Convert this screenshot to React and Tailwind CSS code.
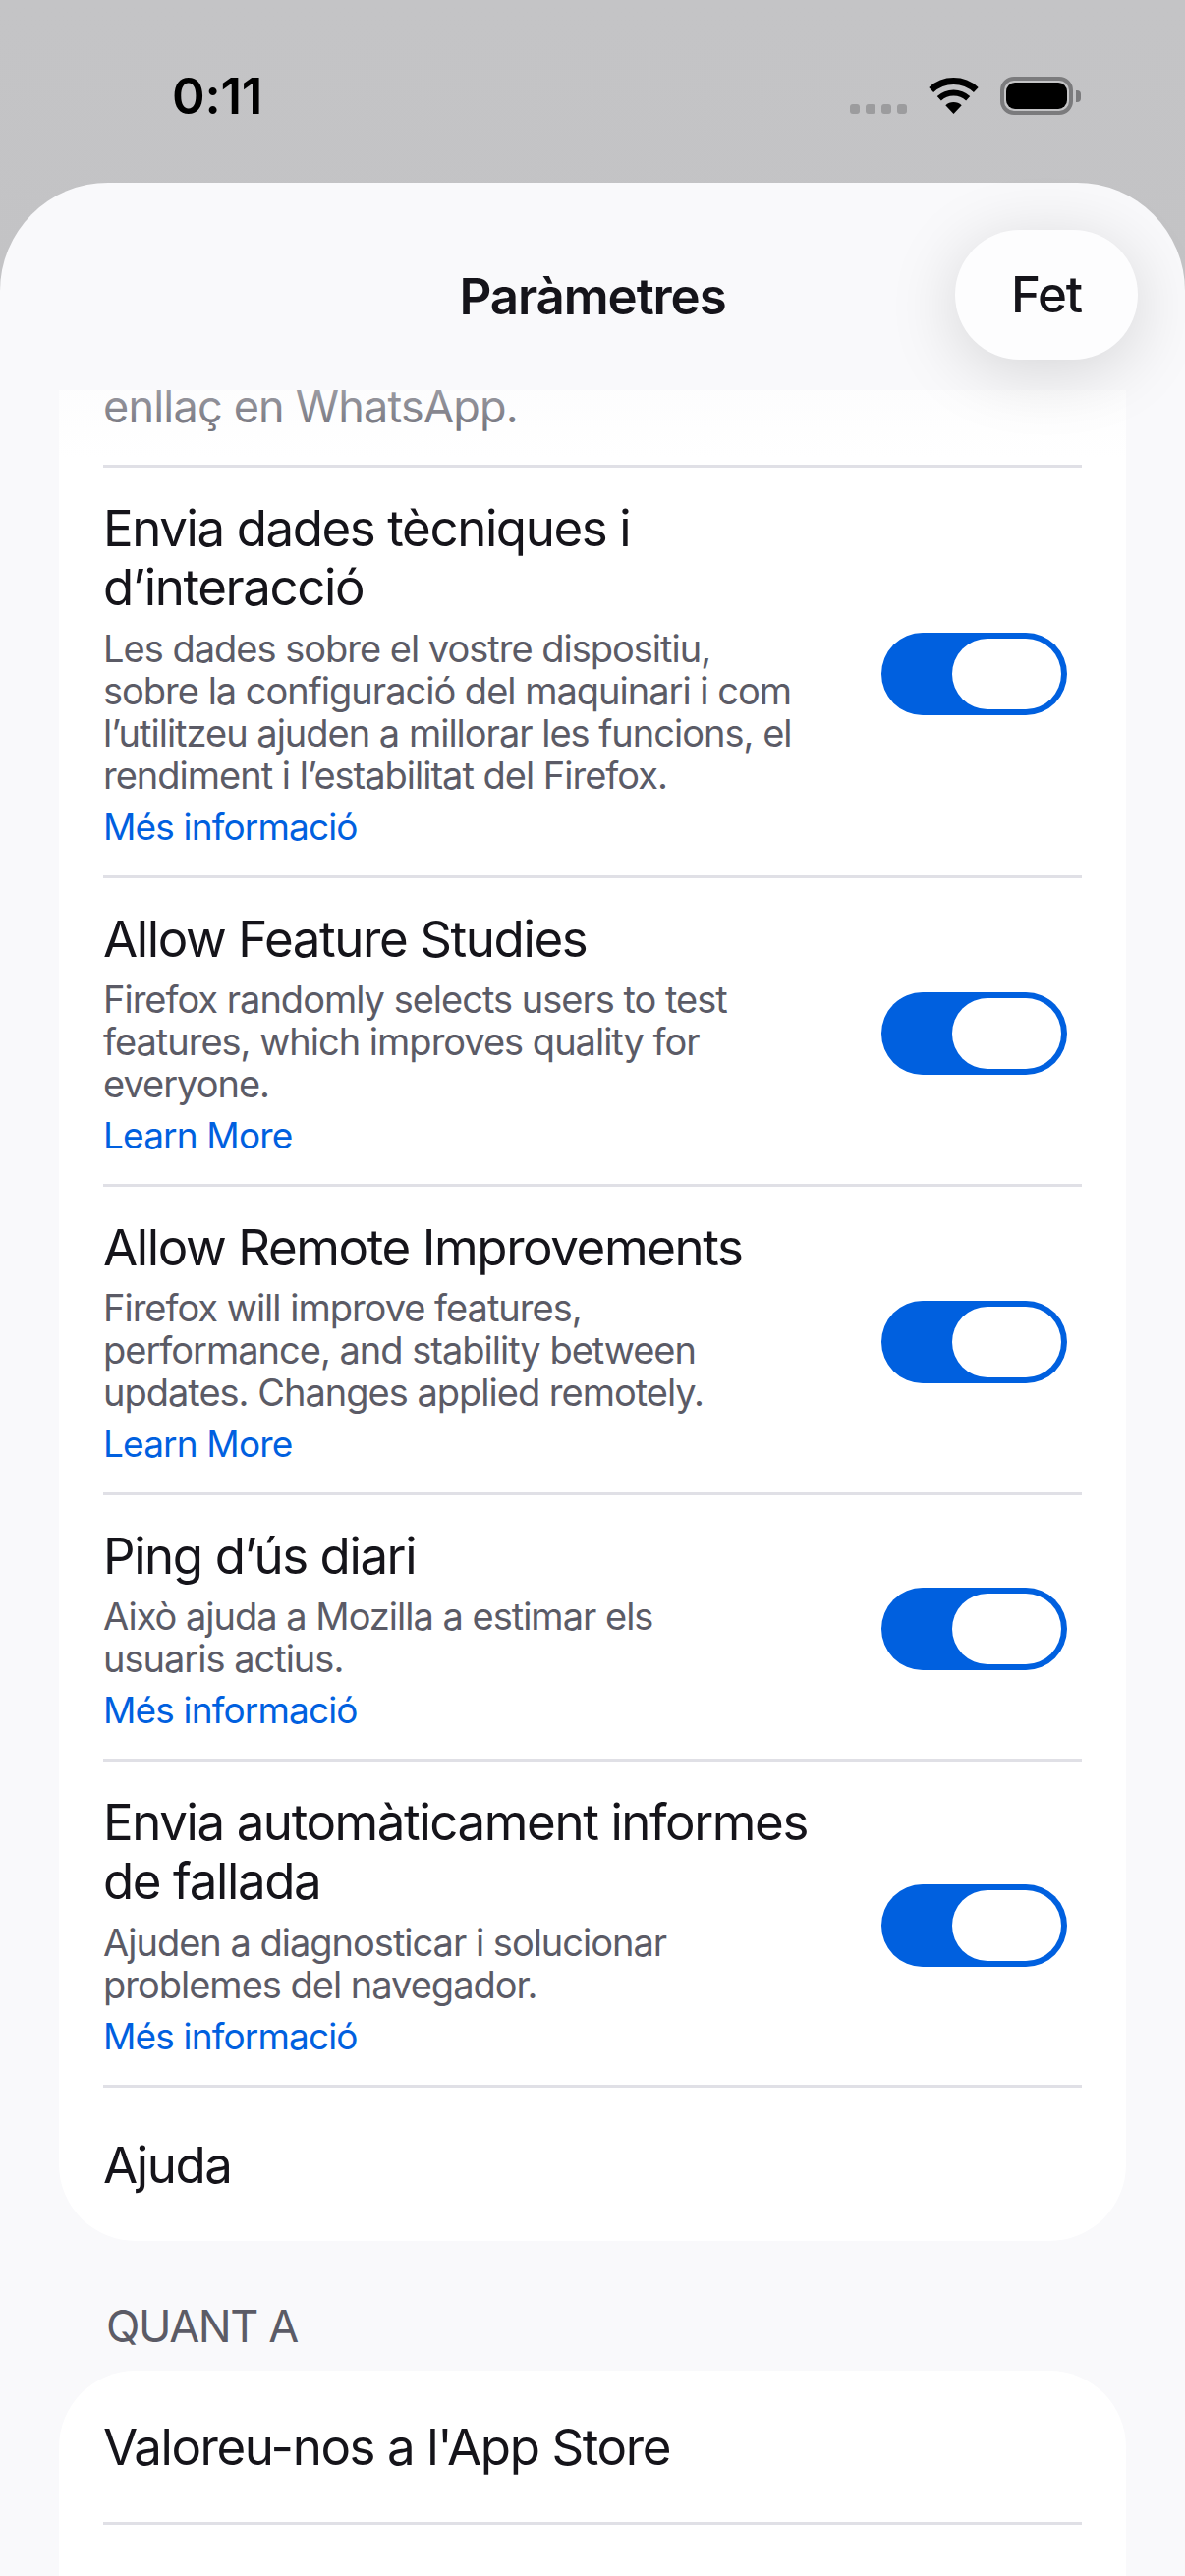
import React from "react";

const rows = [
  {
    title: ["Envia dades tècniques i", "d’interacció"],
    sub: [
      "Les dades sobre el vostre dispositiu,",
      "sobre la configuració del maquinari i com",
      "l’utilitzeu ajuden a millorar les funcions, el",
      "rendiment i l’estabilitat del Firefox.",
    ],
    link: "Més informació",
  },
  {
    title: ["Allow Feature Studies"],
    sub: [
      "Firefox randomly selects users to test",
      "features, which improves quality for",
      "everyone.",
    ],
    link: "Learn More",
  },
  {
    title: ["Allow Remote Improvements"],
    sub: [
      "Firefox will improve features,",
      "performance, and stability between",
      "updates. Changes applied remotely.",
    ],
    link: "Learn More",
  },
  {
    title: ["Ping d’ús diari"],
    sub: ["Això ajuda a Mozilla a estimar els", "usuaris actius."],
    link: "Més informació",
  },
  {
    title: ["Envia automàticament informes", "de fallada"],
    sub: ["Ajuden a diagnosticar i solucionar", "problemes del navegador."],
    link: "Més informació",
  },
];

function Divider() {
  return <div className="mx-[45px] h-[3px] bg-[#e0e0e6]" />;
}

function Toggle() {
  return (
    <div className="mr-[15px] flex h-[84px] w-[189px] shrink-0 items-center justify-end rounded-full bg-[#0060df] pr-[6px]">
      <div className="h-[72px] w-[111px] rounded-full bg-white" />
    </div>
  );
}

function ToggleRow({ title, sub, link }) {
  return (
    <div className="flex items-center justify-between px-[45px] pt-[32px] pb-[28px]">
      <div className="whitespace-nowrap">
        <div className="text-[51px] leading-[60px] tracking-[-1.4px] text-[#15141a]">
          {title.map((line) => (
            <div key={line}>{line}</div>
          ))}
        </div>
        <div
          className={
            title.length > 1
              ? "mt-[11px] text-[38px] leading-[43px] tracking-[-1px] text-[#5b5b66]"
              : "mt-[10px] text-[38px] leading-[43px] tracking-[-1px] text-[#5b5b66]"
          }
        >
          {sub.map((line) => (
            <div key={line}>{line}</div>
          ))}
        </div>
        <div className="mt-[9px] text-[37px] leading-[43px] tracking-[-0.85px] text-[#0060df]">{link}</div>
      </div>
      <Toggle />
    </div>
  );
}

function PlainRow({ label, height }) {
  return (
    <div className={`flex items-center px-[45px] pt-[2px] text-[51px] tracking-[-1.4px] text-[#15141a] ${height}`}>
      {label}
    </div>
  );
}

function WifiIcon() {
  return (
    <svg width="51" height="37" viewBox="0 0 51 37" fill="none">
      <path d="M2.7 12.5A33.5 33.5 0 0 1 48.3 12.5" stroke="#000" strokeWidth="7" />
      <path d="M10.8 21.3A21.5 21.5 0 0 1 40.2 21.3" stroke="#000" strokeWidth="6" />
      <path d="M25.5 37L17.3 28.2A12 12 0 0 1 33.7 28.2Z" fill="#000" />
    </svg>
  );
}

function StatusBar() {
  return (
    <div className="flex h-[186px] items-start justify-between pl-[175px] pr-[106px]">
      <div className="mt-[68px] text-[51px] font-semibold leading-[60px] tracking-[-0.2px] text-black">0:11</div>
      <div className="mt-[78px] flex items-start">
        <div className="mt-[28px] flex gap-[6px]">
          <div className="h-[10px] w-[10px] rounded-[3px] bg-[#9c9c9e]" />
          <div className="h-[10px] w-[10px] rounded-[3px] bg-[#9c9c9e]" />
          <div className="h-[10px] w-[10px] rounded-[3px] bg-[#9c9c9e]" />
          <div className="h-[10px] w-[10px] rounded-[3px] bg-[#9c9c9e]" />
        </div>
        <div className="ml-[22px] mt-[1px]">
          <WifiIcon />
        </div>
        <div className="ml-[22px] flex items-center">
          <div className="h-[39px] w-[74px] rounded-[14px] border-[4px] border-[#7b7b7d] p-[2px]">
            <div className="h-full w-full rounded-[9px] bg-black" />
          </div>
          <div className="ml-[3px] h-[12px] w-[5px] rounded-r-[4px] bg-[#7b7b7d]" />
        </div>
      </div>
    </div>
  );
}

function NavHeader() {
  return (
    <div className="relative z-10 flex h-[211px] items-center justify-center rounded-t-[110px] bg-[#f9f9fb]">
      <div className="mt-[22px] text-[51px] font-semibold tracking-[-1.1px] text-[#15141a]">Paràmetres</div>
      <div className="absolute right-[48px] top-[48px] flex h-[132px] w-[186px] items-center justify-center rounded-full bg-[#fdfdfe] pt-[1px] text-[51px] font-medium tracking-[-1.2px] text-[#15141a] shadow-[0_12px_70px_rgba(0,0,0,0.15)]">
        Fet
      </div>
    </div>
  );
}

export default function App() {
  return (
    <div className="h-[2622px] w-[1206px] overflow-hidden bg-gradient-to-b from-[#c4c4c6] to-[#bbbbbd] font-['Inter',sans-serif]">
      <StatusBar />
      <NavHeader />
      <div className="relative h-[2225px] overflow-hidden bg-[#f9f9fb] px-[60px]">
        <div className="absolute inset-x-0 top-0 z-[5] h-[70px] bg-gradient-to-b from-[#f9f9fb]/40 to-transparent" />
        <div className="rounded-b-[78px] bg-white">
          <div className="mt-[-13px] px-[45px] pb-[29px] text-[45px] leading-[60px] tracking-[-0.8px] text-[#5b5b66]">
            enllaç en WhatsApp.
          </div>
          <Divider />
          {rows.map((row) => (
            <React.Fragment key={row.title[0]}>
              <ToggleRow {...row} />
              <Divider />
            </React.Fragment>
          ))}
          <PlainRow label="Ajuda" height="h-[156px]" />
        </div>
        <div className="mt-[60px] h-[72px] px-[48px] text-[45px] uppercase leading-[54px] tracking-[-1.4px] text-[#5b5b66]">
          Quant a
        </div>
        <div className="rounded-t-[78px] bg-white">
          <PlainRow label="Valoreu-nos a l'App Store" height="h-[154px]" />
          <Divider />
          <div className="h-[60px]" />
        </div>
      </div>
    </div>
  );
}
